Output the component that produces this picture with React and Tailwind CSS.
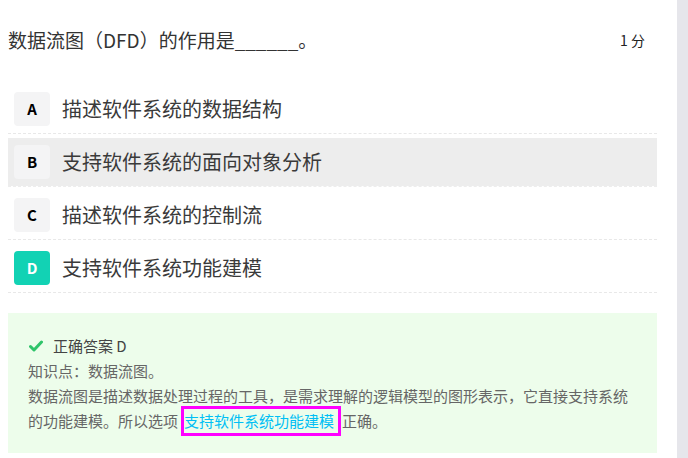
import React from 'react';

const options = [
    { key: 'A', text: '描述软件系统的数据结构' },
    { key: 'B', text: '支持软件系统的面向对象分析', hover: true },
    { key: 'C', text: '描述软件系统的控制流' },
    { key: 'D', text: '支持软件系统功能建模', correct: true },
];

const OptionRow = ({ opt }) => (
    <div className={`pt-[4px] border-b border-dashed ${opt.hover ? 'border-[#ededed]' : 'border-[#e8e8e8]'}`}>
        <div className={`h-[48px] flex items-center px-[6px] ${opt.hover ? 'bg-[#ededed]' : ''}`}>
            <div
                className={`w-[36px] h-[34px] rounded-[4px] flex items-center justify-center text-[15px] font-bold ${opt.correct ? 'bg-[#12d2b4] text-white' : 'bg-[#f4f4f5] text-black'
                    }`}
            >
                {opt.key}
            </div>
            <span className="ml-[12px] text-[20px] text-[#3a3a3a]">{opt.text}</span>
        </div>
    </div>
);

export default function App() {
    return (
        <div
            className="w-[688px] h-[458px] flex bg-white overflow-hidden"
            style={{ fontFamily: '"Noto Sans CJK SC", "Noto Sans", sans-serif' }}
        >
            <div className="w-[677px] pl-[8px] pr-[20px] pt-[26px]">
                {/* question title */}
                <div className="flex items-center justify-between h-[28px]">
                    <div className="text-[19px] text-[#333] leading-[28px]">数据流图（DFD）的作用是______。</div>
                    <div className="text-[14px] text-[#222] pr-[12px]">1 分</div>
                </div>

                <div className="mt-[27px]">
                    {options.map(opt => (
                        <OptionRow key={opt.key} opt={opt} />
                    ))}
                </div>

                {/* answer analysis */}
                <div className="mt-[20px] bg-[#edfdeb] px-[20px] pt-[20px] pb-[20px] text-[15px] leading-[25px] text-[#666]">
                    <div className="flex items-center">
                        <svg width="14" height="12" viewBox="0 0 14 12" className="ml-[1px]">
                            <polyline points="1.5,6.5 5,10 12.5,2" fill="none" stroke="#2fc46a" strokeWidth="3" strokeLinecap="round" strokeLinejoin="round" />
                        </svg>
                        <span className="ml-[10px] text-[#444]">正确答案 D</span>
                    </div>
                    <div>知识点：数据流图。</div>
                    <div>
                        数据流图是描述数据处理过程的工具，是需求理解的逻辑模型的图形表示，它直接支持系统的功能建模。所以选项
                        <span className="inline-block ml-[6px] mr-[4px] pr-[4px] leading-[24px] text-[#00bff5] outline-[3px] outline-solid outline-[#ff00ff]">
                            支持软件系统功能建模
                        </span>
                        正确。
                    </div>
                </div>
            </div>
            <div className="flex-1 bg-[#e6e6eb]" />
        </div>
    );
}
